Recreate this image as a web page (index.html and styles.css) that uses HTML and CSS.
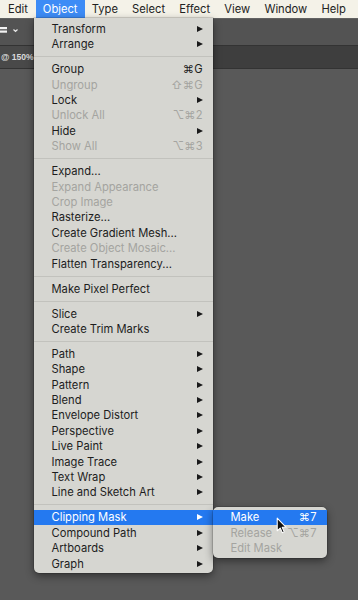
FILE: index.html
```html
<!DOCTYPE html>
<html>
<head>
<meta charset="utf-8">
<link rel="stylesheet" href="styles.css">
</head>
<body>
<div class="app">
  <div class="menubar">
    <span class="mb-item">Edit</span>
    <span class="mb-item active">Object</span>
    <span class="mb-item">Type</span>
    <span class="mb-item">Select</span>
    <span class="mb-item">Effect</span>
    <span class="mb-item">View</span>
    <span class="mb-item">Window</span>
    <span class="mb-item">Help</span>
  </div>
  <div class="toolbar">
    <svg class="tb-icon" width="22" height="12" viewBox="0 0 22 12">
      <rect x="0" y="2" width="7" height="2.2" fill="#f2f2f2"/>
      <rect x="0" y="5.5" width="7" height="2.2" fill="#f2f2f2"/>
      <path d="M13.5 4.5 L15.5 6.5 L17.5 4.5" fill="none" stroke="#e8e8e8" stroke-width="1.2"/>
    </svg>
  </div>
  <div class="docbar"><div class="doctab">@ 150%</div></div>
  <div class="canvas"></div>

  <div class="menu">
    <div class="item"><span>Transform</span><i class="arrow"></i></div>
    <div class="item"><span>Arrange</span><i class="arrow"></i></div>
    <div class="sep"></div>
    <div class="item"><span>Group</span><span class="sc">⌘G</span></div>
    <div class="item disabled"><span>Ungroup</span><span class="sc">⇧⌘G</span></div>
    <div class="item"><span>Lock</span><i class="arrow"></i></div>
    <div class="item disabled"><span>Unlock All</span><span class="sc">⌥⌘2</span></div>
    <div class="item"><span>Hide</span><i class="arrow"></i></div>
    <div class="item disabled"><span>Show All</span><span class="sc">⌥⌘3</span></div>
    <div class="sep"></div>
    <div class="item"><span>Expand...</span></div>
    <div class="item disabled"><span>Expand Appearance</span></div>
    <div class="item disabled"><span>Crop Image</span></div>
    <div class="item"><span>Rasterize...</span></div>
    <div class="item"><span>Create Gradient Mesh...</span></div>
    <div class="item disabled"><span>Create Object Mosaic...</span></div>
    <div class="item"><span>Flatten Transparency...</span></div>
    <div class="sep"></div>
    <div class="item"><span>Make Pixel Perfect</span></div>
    <div class="sep"></div>
    <div class="item"><span>Slice</span><i class="arrow"></i></div>
    <div class="item"><span>Create Trim Marks</span></div>
    <div class="sep"></div>
    <div class="item"><span>Path</span><i class="arrow"></i></div>
    <div class="item"><span>Shape</span><i class="arrow"></i></div>
    <div class="item"><span>Pattern</span><i class="arrow"></i></div>
    <div class="item"><span>Blend</span><i class="arrow"></i></div>
    <div class="item"><span>Envelope Distort</span><i class="arrow"></i></div>
    <div class="item"><span>Perspective</span><i class="arrow"></i></div>
    <div class="item"><span>Live Paint</span><i class="arrow"></i></div>
    <div class="item"><span>Image Trace</span><i class="arrow"></i></div>
    <div class="item"><span>Text Wrap</span><i class="arrow"></i></div>
    <div class="item"><span>Line and Sketch Art</span><i class="arrow"></i></div>
    <div class="sep"></div>
    <div class="item hl sub-host"><span>Clipping Mask</span><i class="arrow"></i>
      <div class="submenu">
        <div class="item hl"><span>Make</span><span class="sc">⌘7</span></div>
        <div class="item disabled"><span>Release</span><span class="sc">⌥⌘7</span></div>
        <div class="item disabled"><span>Edit Mask</span></div>
      </div>
    </div>
    <div class="item"><span>Compound Path</span><i class="arrow"></i></div>
    <div class="item"><span>Artboards</span><i class="arrow"></i></div>
    <div class="item"><span>Graph</span><i class="arrow"></i></div>
  </div>

  <svg class="cursor" width="12" height="17" viewBox="0 0 11 16">
    <path d="M1 1 L1 13 L3.8 10.4 L5.8 14.8 L7.6 14 L5.7 9.7 L9.4 9.7 Z" fill="#111" stroke="#fff" stroke-width="1" stroke-linejoin="round"/>
  </svg>
</div>
</body>
</html>
```

FILE: styles.css
```css
* { box-sizing: border-box; }
html, body { margin: 0; padding: 0; }
body {
  width: 358px;
  height: 600px;
  overflow: hidden;
  font-family: "Inter", "DejaVu Sans", sans-serif;
  font-size: 11.2px;
  color: #1d1d1d;
  background: #595959;
}
.app {
  position: relative;
  height: 600px;
  display: flex;
  flex-direction: column;
}
.menubar {
  height: 18px;
  flex: none;
  display: flex;
  align-items: stretch;
  padding-left: 0.5px;
  background: #f4f2e8;
  color: #222;
}
.mb-item {
  display: flex;
  align-items: center;
  padding: 0 7.1px;
}
.mb-item:first-child { padding-left: 7.5px; padding-right: 7.8px; }
.mb-item.active {
  background: #3d8cf6;
  color: #fff;
}
.toolbar {
  height: 27px;
  flex: none;
  background: #535353;
  border-top: 1px solid #626262;
  display: flex;
  align-items: center;
}
.tb-icon { display: block; margin-top: -2px; }
.docbar {
  height: 24px;
  flex: none;
  background: #3e3e3e;
  border-top: 1px solid #333;
  border-bottom: 1px solid #333;
  display: flex;
}
.doctab {
  width: 36px;
  background: #494949;
  color: #dadada;
  font-family: "Liberation Sans", sans-serif;
  font-weight: bold;
  font-size: 8.6px;
  display: flex;
  align-items: center;
  padding-left: 1px;
  white-space: nowrap;
  overflow: hidden;
}
.canvas {
  flex: 1;
  background: #595959;
}
.menu {
  position: absolute;
  left: 34px;
  top: 18px;
  width: 179px;
  padding: 3.2px 0 1.8px;
  background: #d6d6d1;
  border-radius: 0 0 5px 5px;
  box-shadow: 0 3px 9px rgba(0,0,0,0.45), 0 0 0 0.5px rgba(0,0,0,0.25);
}
.item {
  height: 15.4px;
  display: flex;
  align-items: center;
  justify-content: space-between;
  padding: 0 10px 0 17.5px;
  white-space: nowrap;
}
.item.disabled { color: #a4a4a0; }
.item.hl {
  background: #2479f0;
  color: #fff;
}
.sc {
  font-family: "Inter", "DejaVu Sans", sans-serif;
  letter-spacing: 0.3px;
}
.arrow {
  display: block;
  width: 0;
  height: 0;
  border-left: 6px solid #1a1a1a;
  border-top: 3.5px solid transparent;
  border-bottom: 3.5px solid transparent;
}
.item.hl .arrow { border-left-color: #fff; }
.sep {
  height: 1px;
  margin: 4.3px 0;
  background: #c2c2bd;
}
.sub-host { position: relative; }
.submenu {
  position: absolute;
  left: 100%;
  top: -3px;
  width: 114px;
  padding: 3px 0 2.5px;
  background: #d6d6d1;
  border-radius: 5px;
  box-shadow: 0 3px 9px rgba(0,0,0,0.45), 0 0 0 0.5px rgba(0,0,0,0.25);
  color: #1d1d1d;
}
.submenu .item { padding: 0 10px 0 17.5px; }
.cursor {
  position: absolute;
  left: 276px;
  top: 517px;
}
```
